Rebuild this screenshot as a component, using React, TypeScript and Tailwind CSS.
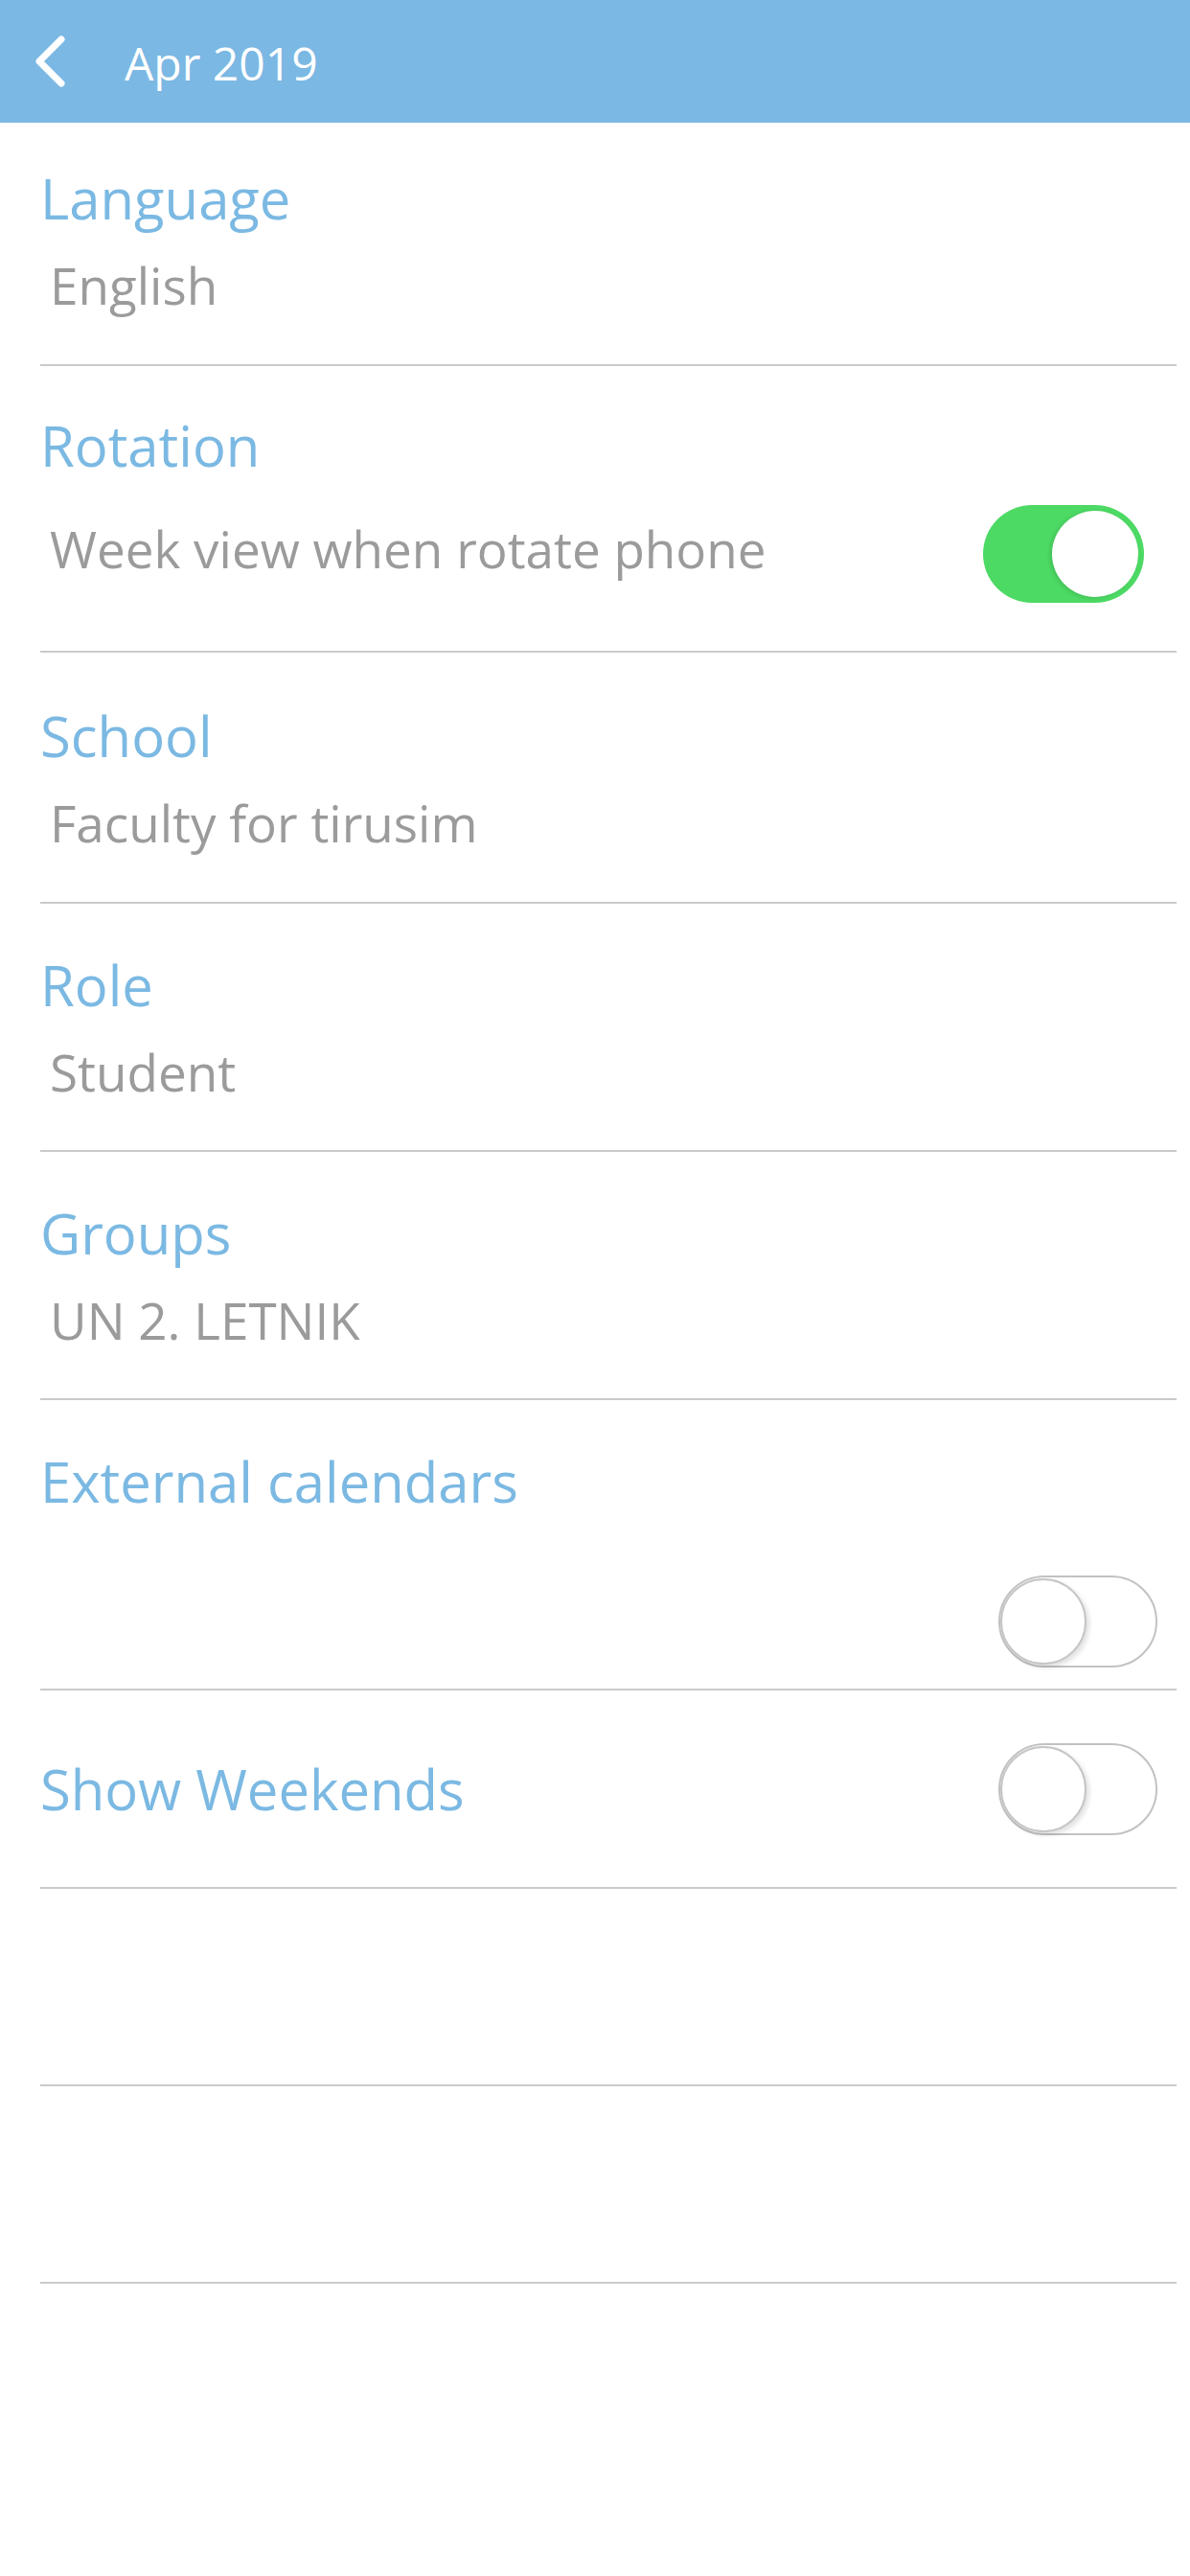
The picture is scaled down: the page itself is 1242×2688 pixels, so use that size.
import React from "react";

const font = { fontFamily: '"Open Sans", "Noto Sans", sans-serif' };

function Divider() {
  return <div className="h-[2px] bg-[#cacaca] mr-[14px]" />;
}

function Toggle({ on }: { on: boolean }) {
  if (on) {
    return (
      <div className="w-[168px] h-[102px] rounded-full bg-[#4cd964] flex items-center justify-end pr-[6px]">
        <div className="size-[90px] rounded-full bg-white shadow-[-2px_1px_4px_rgba(0,0,0,0.12)]" />
      </div>
    );
  }
  return (
    <div className="w-[166px] h-[96px] rounded-full bg-white border-2 border-[#c2c2c2] flex items-center">
      <div className="size-[90px] rounded-full bg-white border-2 border-[#c6c6c6] shadow-[3px_3px_5px_rgba(0,0,0,0.12)]" />
    </div>
  );
}

function InfoRow({
  label,
  value,
  pad = "pt-[50px] pb-[46px]",
}: {
  label: string;
  value: string;
  pad?: string;
}) {
  return (
    <div className={pad}>
      <div className="text-[58px] leading-[70px] text-[#7bb9e3]">{label}</div>
      <div className="mt-[21px] pl-[10px] text-[53px] leading-[70px] text-[#9b9b9b]">
        {value}
      </div>
    </div>
  );
}

export default function App() {
  return (
    <div className="min-h-screen bg-white" style={font}>
      <header className="h-[128px] bg-[#7bb8e3] flex items-center">
        <svg
          width="40"
          height="56"
          viewBox="0 0 40 56"
          className="ml-[33px]"
          fill="none"
          stroke="white"
          strokeWidth="7"
          strokeLinecap="round"
          strokeLinejoin="round"
        >
          <polyline points="31,5 8,28 31,51" />
        </svg>
        <h1 className="ml-[57px] pt-[4px] text-[48px] text-white leading-none">Apr 2019</h1>
      </header>

      <main className="pl-[42px]">
        <InfoRow label="Language" value="English" pad="pt-[44px] pb-[47px]" />
        <Divider />

        <div className="pt-[48px] pb-[50px]">
          <div className="text-[58px] leading-[70px] text-[#7bb9e3]">Rotation</div>
          <div className="mt-[27px] h-[102px] flex items-center justify-between pr-[48px]">
            <span className="pl-[10px] pb-[10px] text-[53px] leading-[70px] text-[#9b9b9b]">
              Week view when rotate phone
            </span>
            <Toggle on />
          </div>
        </div>
        <Divider />

        <InfoRow label="School" value="Faculty for tirusim" pad="pt-[52px] pb-[47px]" />
        <Divider />
        <InfoRow label="Role" value="Student" />
        <Divider />
        <InfoRow label="Groups" value="UN 2. LETNIK" />
        <Divider />

        <div className="pt-[50px] pb-[22px]">
          <div className="text-[58px] leading-[70px] text-[#7bb9e3]">
            External calendars
          </div>
          <div className="mt-[63px] flex justify-end pr-[34px]">
            <Toggle on={false} />
          </div>
        </div>
        <Divider />

        <div className="h-[205px] flex items-center justify-between pr-[34px]">
          <span className="text-[58px] leading-[70px] text-[#7bb9e3]">Show Weekends</span>
          <Toggle on={false} />
        </div>
        <Divider />

        <div className="h-[204px]" />
        <Divider />
        <div className="h-[204px]" />
        <Divider />
      </main>
    </div>
  );
}
